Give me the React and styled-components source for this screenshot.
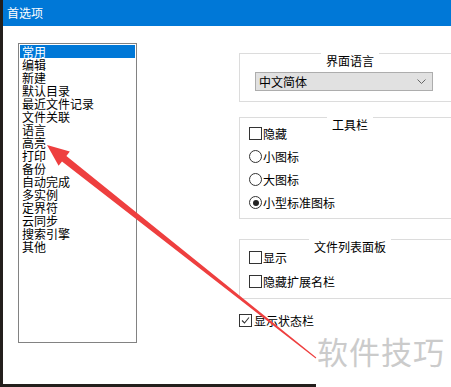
import React from 'react';
import styled, { createGlobalStyle } from 'styled-components';

const GlobalStyle = createGlobalStyle`
  html, body {
    margin: 0;
    padding: 0;
    background: #ffffff;
    overflow: hidden;
  }
  body {
    font-family: "Noto Sans CJK SC", "Microsoft YaHei", sans-serif;
    font-size: 12px;
    color: #000;
  }
`;

const Page = styled.div`
  position: relative;
  width: 451px;
  height: 387px;
  overflow: hidden;
  background: #fff;
`;

const Window = styled.div`
  display: flex;
  flex-direction: column;
  height: 384px;
  border-left: 3px solid #231f1c;
  background: #fff;
`;

const TitleBar = styled.div`
  height: 26px;
  line-height: 26px;
  padding-left: 4px;
  background: #0078d7;
  color: #fff;
  font-size: 12px;
  flex-shrink: 0;
`;

const Body = styled.div`
  display: flex;
  align-items: flex-start;
  padding: 17px 0 0 15px;
`;

const ListBox = styled.div`
  box-sizing: border-box;
  width: 119px;
  height: 300px;
  border: 1px solid #828282;
  padding: 1px;
  flex-shrink: 0;
`;

const ListItem = styled.div`
  line-height: 13px;
  padding-left: 2px;
  font-size: 12px;
  white-space: nowrap;
  background: ${p => (p.selected ? '#0078d7' : 'transparent')};
  color: ${p => (p.selected ? '#fff' : '#000')};
`;

const Options = styled.div`
  display: flex;
  flex-direction: column;
  margin: 10px 0 0 102px;
  width: 222px;
  flex-shrink: 0;
`;

const Group = styled.div`
  position: relative;
  box-sizing: border-box;
  border: 1px solid #dcdcdc;
  margin-top: ${p => p.gap || 0}px;
  padding: ${p => p.pad};
`;

const GroupTitle = styled.span`
  position: absolute;
  top: -1px;
  left: 50%;
  transform: translateX(-50%);
  padding: 2px 5px 0;
  background: #fff;
  font-size: 12px;
  line-height: 12px;
  white-space: nowrap;
`;

const Select = styled.div`
  box-sizing: border-box;
  display: flex;
  align-items: center;
  justify-content: space-between;
  width: 178px;
  height: 19px;
  margin-left: 15px;
  padding: 0 6px 0 3px;
  border: 1px solid #adadad;
  background: #e1e1e1;
  font-size: 12px;
`;

const Row = styled.div`
  display: flex;
  align-items: center;
  height: ${p => p.h || 23}px;
  margin-top: ${p => p.top || 0}px;
  gap: ${p => p.gap || 1}px;
  font-size: 12px;
  white-space: nowrap;
`;

const Box = styled.span`
  box-sizing: border-box;
  display: inline-flex;
  align-items: center;
  justify-content: center;
  width: 13px;
  height: 13px;
  border: 1px solid #333;
  background: #fff;
  flex-shrink: 0;
`;

const Radio = styled.span`
  box-sizing: border-box;
  position: relative;
  display: inline-block;
  width: 13px;
  height: 13px;
  border: 1px solid #333;
  border-radius: 50%;
  background: #fff;
  flex-shrink: 0;
  &::after {
    content: '';
    display: ${p => (p.checked ? 'block' : 'none')};
    position: absolute;
    left: 2.5px;
    top: 2.5px;
    width: 6px;
    height: 6px;
    border-radius: 50%;
    background: #222;
  }
`;

const BottomEdge = styled.div`
  width: 316px;
  height: 3px;
  background: #231f1c;
`;

const Watermark = styled.div`
  position: absolute;
  left: 317px;
  top: 329px;
  font-size: 31px;
  line-height: 44px;
  letter-spacing: 1px;
  color: #cbcbcb;
  white-space: nowrap;
`;

const Overlay = styled.svg`
  position: absolute;
  left: 0;
  top: 0;
  pointer-events: none;
`;

const items = [
  '常用', '编辑', '新建', '默认目录', '最近文件记录', '文件关联', '语言', '高亮',
  '打印', '备份', '自动完成', '多实例', '定界符', '云同步', '搜索引擎', '其他',
];

function Check({ checked }) {
  return (
    <Box>
      {checked && (
        <svg width="9" height="9" viewBox="0 0 9 9">
          <path d="M1 4.5 L3.5 7 L8 1.5" fill="none" stroke="#333" strokeWidth="1.1" />
        </svg>
      )}
    </Box>
  );
}

export default function App() {
  return (
    <Page>
      <GlobalStyle />
      <Window>
        <TitleBar>首选项</TitleBar>
        <Body>
          <ListBox>
            {items.map((t, i) => (
              <ListItem key={t} selected={i === 0}>{t}</ListItem>
            ))}
          </ListBox>
          <Options>
            <Group pad="18px 0 10px 0">
              <GroupTitle>界面语言</GroupTitle>
              <Select>
                <span>中文简体</span>
                <svg width="9" height="5" viewBox="0 0 9 5">
                  <path d="M0.5 0.5 L4.5 4.5 L8.5 0.5" fill="none" stroke="#666" strokeWidth="1" />
                </svg>
              </Select>
            </Group>
            <Group gap={15} pad="4px 0 4px 9px">
              <GroupTitle>工具栏</GroupTitle>
              <Row><Check />隐藏</Row>
              <Row><Radio />小图标</Row>
              <Row><Radio />大图标</Row>
              <Row><Radio checked />小型标准图标</Row>
            </Group>
            <Group gap={20} pad="5px 0 5px 9px">
              <GroupTitle>文件列表面板</GroupTitle>
              <Row h={24}><Check />显示</Row>
              <Row h={24}><Check />隐藏扩展名栏</Row>
            </Group>
            <Row h={24} gap={2} top={9}><Check checked />显示状态栏</Row>
          </Options>
        </Body>
      </Window>
      <BottomEdge />
      <Watermark>软件技巧</Watermark>
      <Overlay width="451" height="387" viewBox="0 0 451 387">
        <polygon
          points="47,145 69.8,151.6 66.4,155.9 316.3,357.6 315.7,358.4 62,161.4 58.6,165.8"
          fill="#ee3f3f"
        />
      </Overlay>
    </Page>
  );
}
